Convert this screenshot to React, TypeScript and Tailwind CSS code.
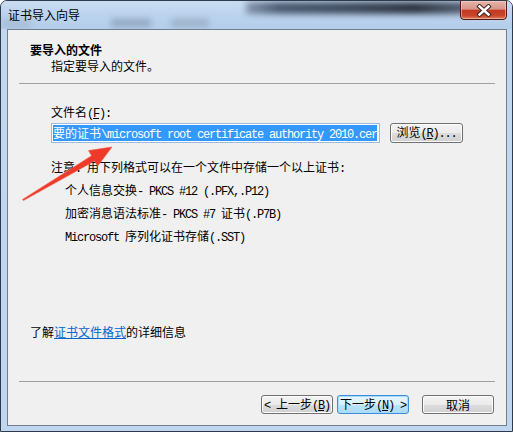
import React from 'react';

const cjk = "font-['Noto_Sans_CJK_SC','Noto_Sans',sans-serif]";

// SimSun-like half-width ascii: 6px advance at 12px
const A: React.FC<{ children: React.ReactNode }> = ({ children }) => (
  <span className="font-['Liberation_Mono','DejaVu_Sans_Mono',monospace] text-[12px] tracking-[-1.2px] whitespace-pre">{children}</span>
);

const Key: React.FC<{ k: string }> = ({ k }) => (
  <A>
    (<span className="underline">{k}</span>)
  </A>
);

const WinButton: React.FC<{ focused?: boolean; className?: string; children: React.ReactNode }> = ({ focused, className = '', children }) => (
  <button
    className={`flex items-center justify-center rounded-[3px] border text-[12px] leading-[16px] text-black ${
      focused
        ? 'border-[#3c8fd6] bg-[linear-gradient(to_bottom,#e9f6fe_0%,#d8effc_50%,#bde4fa_51%,#a9dbf6_100%)] shadow-[inset_0_0_0_1px_#a6dcf7]'
        : 'border-[#707070] bg-[linear-gradient(to_bottom,#f3f3f3_0%,#ebebeb_50%,#dddddd_51%,#d0d0d0_100%)] shadow-[inset_0_0_0_1px_#fbfbfb]'
    } ${className}`}
  >
    <span className="whitespace-nowrap">{children}</span>
  </button>
);

const App: React.FC = () => {
  return (
    <div className={`relative w-[513px] h-[432px] overflow-hidden bg-white ${cjk}`}>
      <div className="flex flex-col w-[513px] h-[432px] rounded-t-[7px] border border-[#2e3b4c] bg-[linear-gradient(to_bottom,#c3d8ef,#bfd6ef)]">
        {/* title bar */}
        <div className="relative h-[28px] flex items-center pl-[7px] overflow-hidden rounded-t-[6px] bg-[linear-gradient(to_bottom,#c9ddf2_0%,#bcd3ed_50%,#b3ceeb_100%)]">
          <div className="absolute left-[245px] top-[1px] w-[225px] h-[12px] blur-[3px] bg-[linear-gradient(90deg,#8496ad_0%,#4a5a70_15%,#3d4a5d_45%,#2b333f_75%,#566579_100%)]" />
          <div className="absolute left-[110px] top-[18px] w-[40px] h-[8px] blur-[3px] bg-[#93a8c0]" />
          <div className="absolute left-[170px] top-[18px] w-[38px] h-[8px] blur-[3px] bg-[#9db1c8]" />
          <div className="absolute left-[0px] top-[18px] w-[30px] h-[10px] blur-[3px] bg-[#a9bfd8]" />
          <span className="relative text-[12px] leading-[16px] text-black">证书导入向导</span>
          <div className="absolute top-[-1px] right-[5px] w-[47px] h-[20px] rounded-b-[4px] border border-[#4a1c14] bg-[linear-gradient(to_bottom,#e6b3aa_0%,#d8958a_45%,#c23a22_52%,#c84428_80%,#e27a58_100%)] shadow-[inset_0_0_0_1px_rgba(255,220,210,0.5)] flex items-center justify-center">
            <svg width="16" height="13" viewBox="0 0 16 13">
              <path d="M3.5 2.5 L12.5 10.5 M12.5 2.5 L3.5 10.5" stroke="#3a2926" strokeWidth="4.4" strokeLinecap="square" fill="none" />
              <path d="M3.5 2.5 L12.5 10.5 M12.5 2.5 L3.5 10.5" stroke="#ffffff" strokeWidth="2.4" strokeLinecap="square" fill="none" />
            </svg>
          </div>
        </div>

        {/* client area */}
        <div className="flex flex-col w-[500px] h-[397px] ml-[6px] border border-[#6f7f90] bg-[#f0f0f0] text-[12px] leading-[16px] text-black">
          <div className="pl-[22px] pt-[12px]">
            <div className="h-[16px] font-bold">要导入的文件</div>
            <div className="h-[16px] pl-[21px]">指定要导入的文件。</div>
          </div>
          <div className="mt-[9px] mx-[11px] border-t border-[#a0a0a0]" />

          <div className="pl-[43px] mt-[20px]">
            <div className="h-[16px]">
              文件名<Key k="F" />
              <A>:</A>
            </div>
            <div className="flex mt-[3px]">
              <div className="w-[329px] h-[20px] border border-[#9dbbdc] bg-white px-[1px] pt-[1px] overflow-hidden whitespace-nowrap">
                <span className="bg-[#3399ff] text-white leading-[16px] inline-block h-[16px]">
                  要的证书<A>{'\\microsoft root certificate authority 2010.cer'}</A>
                </span>
              </div>
              <WinButton className="ml-[10px] w-[73px] h-[20px]">
                浏览<Key k="R" />
                <A>...</A>
              </WinButton>
            </div>
            <div className="h-[16px] mt-[16px] whitespace-nowrap">
              注意<A>: </A>用下列格式可以在一个文件中存储一个以上证书<A>:</A>
            </div>
            <div className="pl-[14px] mt-[3px] leading-[23px]">
              <div className="h-[23px] whitespace-nowrap">
                个人信息交换<A>- PKCS #12 (.PFX,.P12)</A>
              </div>
              <div className="h-[23px] whitespace-nowrap">
                加密消息语法标准<A>- PKCS #7 </A>证书<A>(.P7B)</A>
              </div>
              <div className="h-[23px] whitespace-nowrap">
                <A>Microsoft </A>序列化证书存储<A>(.SST)</A>
              </div>
            </div>
          </div>

          <div className="pl-[22px] mt-[77px] h-[16px] whitespace-nowrap">
            了解<a className="text-[#0066cc] underline">证书文件格式</a>的详细信息
          </div>

          <div className="mt-[41px] mx-[11px] border-t border-[#a0a0a0]" />

          <div className="flex justify-end pr-[12px] mt-[13px]">
            <WinButton className="w-[72px] h-[19px]">
              <A>{'< '}</A>上一步<Key k="B" />
            </WinButton>
            <WinButton focused className="ml-[4px] w-[72px] h-[19px]">
              下一步<Key k="N" />
              <A>{' >'}</A>
            </WinButton>
            <WinButton className="ml-[13px] w-[72px] h-[19px]">取消</WinButton>
          </div>
        </div>
      </div>

      {/* red annotation arrow */}
      <svg className="absolute top-0 left-0 pointer-events-none" width="513" height="432" viewBox="0 0 513 432">
        <polygon
          points="22.6,199.4 91.6,155.7 88.5,150.6 112,147 97.7,166 94.6,160.9 23.4,200.6"
          fill="#ef3a2a"
          stroke="#f0584a"
          strokeWidth="0.6"
          strokeLinejoin="round"
        />
      </svg>
    </div>
  );
};

export default App;
